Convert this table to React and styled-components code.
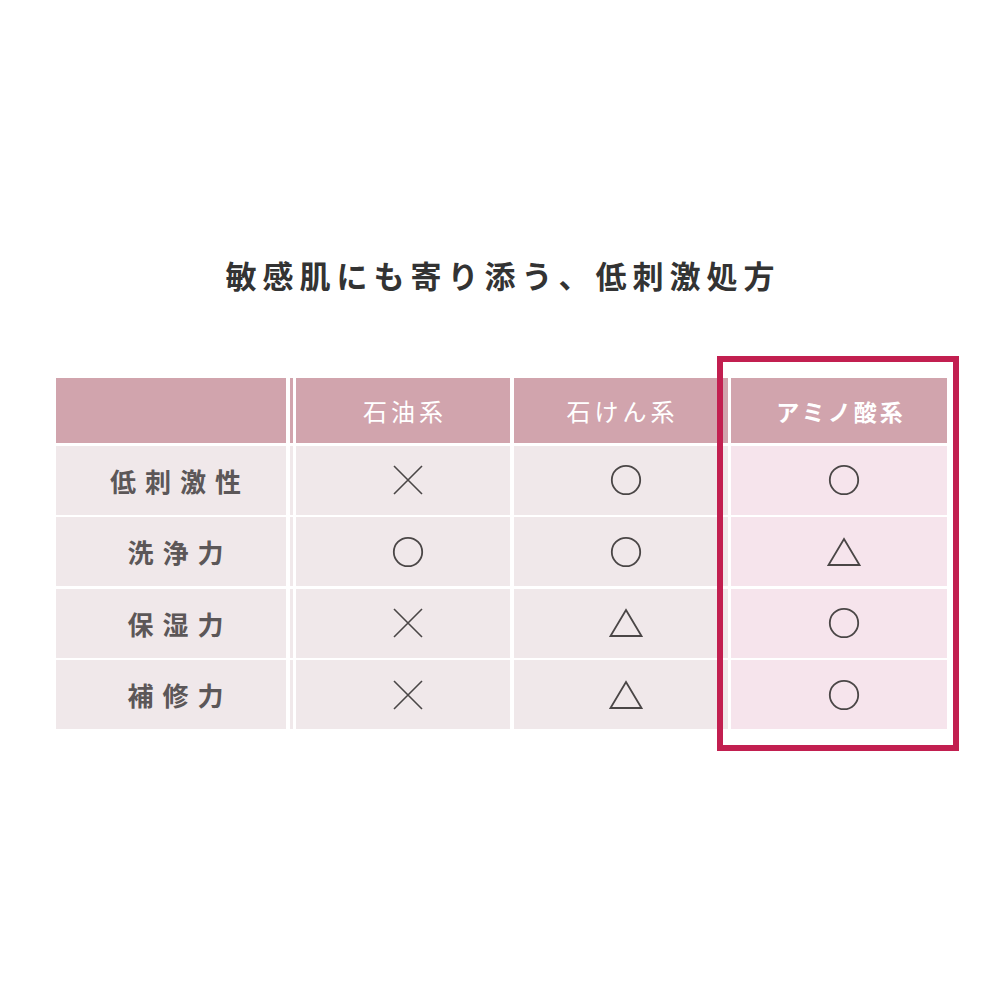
import React from 'react';
import styled, { createGlobalStyle } from 'styled-components';

const GlobalStyle = createGlobalStyle`
  html, body {
    margin: 0;
    padding: 0;
    background: #fff;
    font-family: "Noto Sans CJK JP", "Noto Sans", sans-serif;
  }
`;

const Page = styled.div`
  width: 1000px;
  height: 1000px;
  box-sizing: border-box;
  padding-top: 254px;
  position: relative;
`;

const Title = styled.h1`
  margin: 0;
  text-align: center;
  font-size: 31px;
  line-height: 42px;
  font-weight: 700;
  letter-spacing: 6px;
  padding-left: 6px;
  color: #333;
`;

const Table = styled.div`
  margin: 82px 0 0 56px;
  width: 891px;
  display: grid;
  grid-template-columns: 230px 3px 214px 214px 216px;
  grid-template-rows: 65px repeat(4, 69px);
  column-gap: 3.5px;
  row-gap: 2.5px;
  position: relative;
`;

const Head = styled.div`
  background: #d1a4ad;
  color: #fff;
  display: flex;
  align-items: center;
  justify-content: center;
  font-size: ${p => (p.$strong ? '23px' : '24px')};
  font-weight: ${p => (p.$strong ? 700 : 400)};
  letter-spacing: ${p => (p.$strong ? '3px' : '4px')};
  padding-left: 4px;
`;

const Strip = styled.div`
  background: ${p => (p.$head ? '#d1a4ad' : '#f0e8ea')};
`;

const Label = styled.div`
  background: #f0e8ea;
  color: #5c5758;
  display: flex;
  align-items: center;
  justify-content: center;
  padding-left: 18px;
  font-size: 26px;
  font-weight: 700;
  letter-spacing: 9px;
`;

const Cell = styled.div`
  background: ${p => (p.$pick ? '#f6e4ec' : '#f0e8ea')};
  display: flex;
  align-items: center;
  justify-content: center;
  padding-left: 10px;
  color: #4a4646;
`;

const Frame = styled.div`
  position: absolute;
  left: 661px;
  top: -22px;
  width: 242px;
  height: 395px;
  box-sizing: border-box;
  border: 6px solid #c21f50;
  pointer-events: none;
`;

const Mark = ({ type }) => {
  if (type === 'x') {
    return (
      <svg width="30" height="30" viewBox="0 0 30 30">
        <path d="M1 1 L29 29 M29 1 L1 29" stroke="currentColor" strokeWidth="1.6" fill="none" />
      </svg>
    );
  }
  if (type === 'o') {
    return (
      <svg width="32" height="32" viewBox="0 0 32 32">
        <circle cx="16" cy="16" r="14.2" stroke="currentColor" strokeWidth="1.8" fill="none" />
      </svg>
    );
  }
  return (
    <svg width="34" height="30" viewBox="0 0 34 30">
      <path d="M17 2 L32.5 28 L1.5 28 Z" stroke="currentColor" strokeWidth="1.8" fill="none" strokeLinejoin="miter" />
    </svg>
  );
};

const rows = [
  ['低刺激性', 'x', 'o', 'o'],
  ['洗浄力', 'o', 'o', 't'],
  ['保湿力', 'x', 't', 'o'],
  ['補修力', 'x', 't', 'o'],
];

export default function App() {
  return (
    <Page>
      <GlobalStyle />
      <Title>敏感肌にも寄り添う、低刺激処方</Title>
      <Table>
        <Head />
        <Strip $head />
        <Head>石油系</Head>
        <Head>石けん系</Head>
        <Head $strong>アミノ酸系</Head>
        {rows.map(([label, a, b, c]) => (
          <React.Fragment key={label}>
            <Label>{label}</Label>
            <Strip />
            <Cell><Mark type={a} /></Cell>
            <Cell><Mark type={b} /></Cell>
            <Cell $pick><Mark type={c} /></Cell>
          </React.Fragment>
        ))}
        <Frame />
      </Table>
    </Page>
  );
}
